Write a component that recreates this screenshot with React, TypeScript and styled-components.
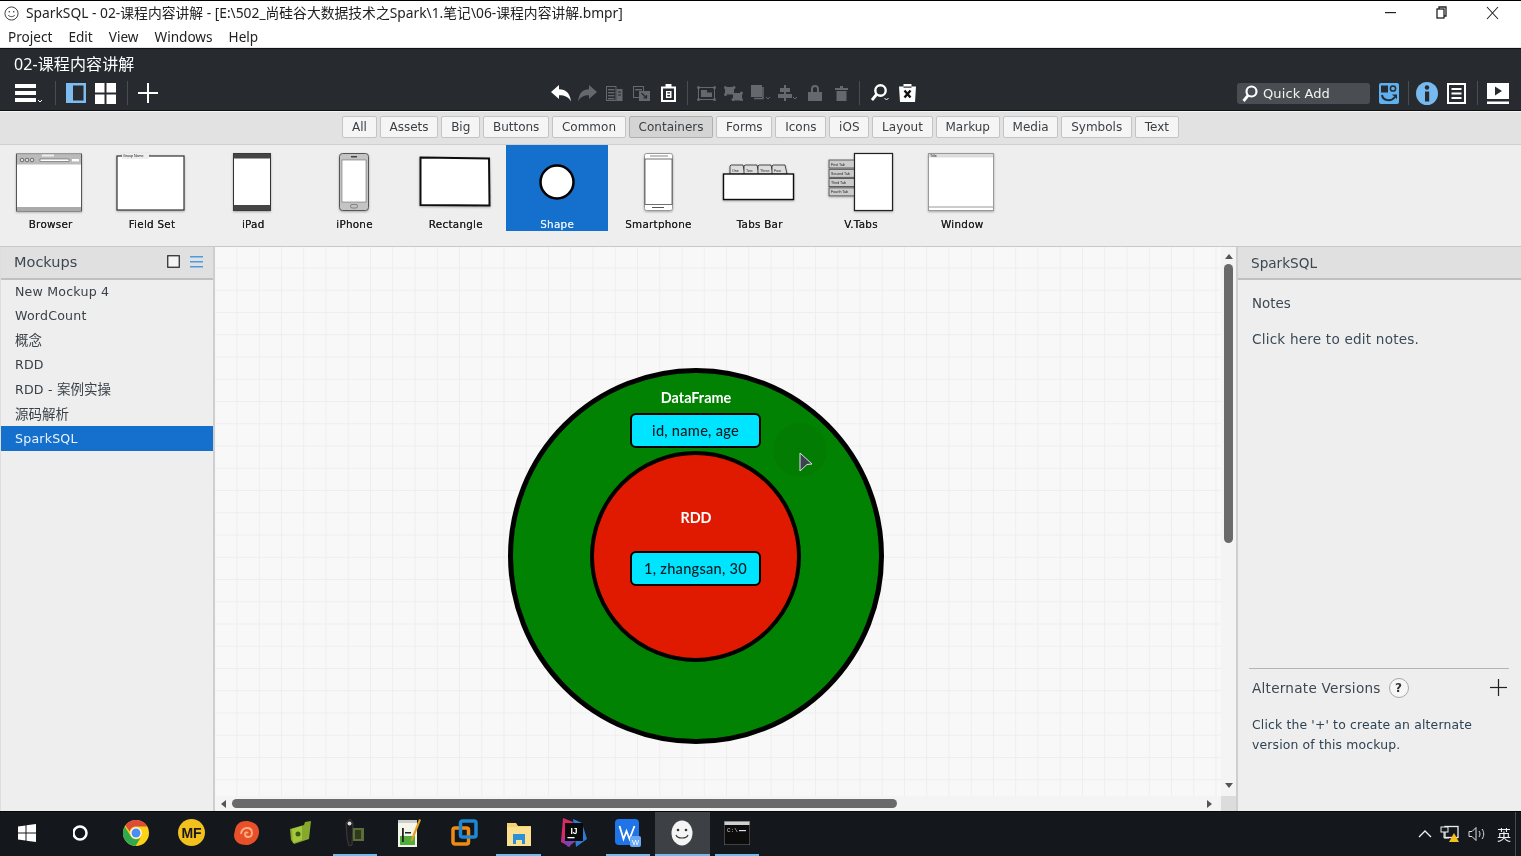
import React from "react";
import styled, { createGlobalStyle } from "styled-components";

const UI = `"DejaVu Sans", "Noto Sans CJK SC", sans-serif`;
const WIN = `"Noto Sans", "Noto Sans CJK SC", sans-serif`;
const SKETCH = `Lato, "Noto Sans", sans-serif`;

const Global = createGlobalStyle`
  html, body { margin: 0; padding: 0; background: #fff; }
  * { box-sizing: border-box; }
`;

const Page = styled.div`
  width: 1521px; height: 856px; overflow: hidden; display: flex; flex-direction: column;
  font-family: ${UI}; background: #eee; filter: blur(0.35px);
`;

/* title bar */
const TitleBar = styled.div`
  height: 26px; background: #fff; border-top: 1px solid #000; display: flex; align-items: center;
  padding-left: 4px; flex: none;
`;
const TitleText = styled.div`
  margin-left: 7px; font: 13.8px ${WIN}; color: #222; white-space: nowrap; margin-bottom: 3px;
`;
const WinButtons = styled.div`
  margin-left: auto; display: flex; align-items: center; height: 100%; padding-right: 3px; color: #222;
`;
const WinBtn = styled.div`
  width: 51px; height: 100%; display: flex; align-items: center; justify-content: center; padding-bottom: 2px;
`;
const MenuBar = styled.div`
  height: 22px; background: #fff; display: flex; align-items: center; gap: 16px; padding-left: 8px; flex: none;
  border-bottom: 1px solid #e6e6e6;
`;
const MenuItem = styled.span`
  font: 13.6px ${WIN}; color: #222;
`;

/* dark header */
const Header = styled.div`
  height: 63px; background: #272b2f; flex: none; border-top: 1px solid #111; border-bottom: 1px solid #111;
  display: flex; flex-direction: column; color: #fff;
`;
const ProjectName = styled.div`
  font: 16px ${WIN}; padding: 2px 0 0 14px; height: 32px; letter-spacing: 0.1px;
`;
const Toolbar = styled.div`
  display: flex; align-items: center; height: 24px; padding: 0 12px 0 15px;
`;
const Group = styled.div<{ $ml?: number }>`
  display: flex; align-items: center; margin-left: ${p => p.$ml ?? 0}px;
`;
const RightGroup = styled(Group)`
  margin-left: auto;
`;
const Slot = styled.div<{ $w: number; $ml?: number; $dim?: boolean }>`
  width: ${p => p.$w}px; margin-left: ${p => p.$ml ?? 0}px; height: 24px; flex: none;
  display: flex; align-items: center; justify-content: center;
  color: ${p => (p.$dim ? "#65696d" : "#fff")};
`;
const Sep = styled.div<{ $ml: number; $mr: number }>`
  width: 1px; height: 24px; background: #4a4e52; flex: none;
  margin: 0 ${p => p.$mr}px 0 ${p => p.$ml}px;
`;
const QuickAdd = styled.div`
  width: 133px; height: 21px; background: #4a4e52; border-radius: 3px; display: flex; align-items: center;
  padding-left: 3px; gap: 4px; font: 13px ${UI}; color: #f2f2f2; flex: none; letter-spacing: 0.1px;
`;

/* filter tabs */
const FilterBar = styled.div`
  height: 34px; background: #e2e2e2; border-bottom: 1px solid #cfcfcf; flex: none; border-top: 1px solid #f4f4f4;
  display: flex; align-items: center; justify-content: center; gap: 3px; padding-bottom: 2px;
`;
const FilterTab = styled.div<{ $active?: boolean }>`
  height: 22px; padding: 0 8.8px; display: flex; align-items: center; font-size: 12px; color: #3a3f44;
  background: ${p => (p.$active ? "#d4d4d4" : "#f5f5f5")};
  border: 1px solid ${p => (p.$active ? "#b0b0b0" : "#c4c4c4")};
  border-radius: 2px;
`;

/* library */
const Library = styled.div`
  height: 102px; background: #eee; flex: none; border-bottom: 1px solid #c8c8c8; display: flex;
`;
const LibItem = styled.div<{ $active?: boolean }>`
  width: 101.3px; height: 86px; flex: none; display: flex; flex-direction: column; align-items: center;
  background: ${p => (p.$active ? "#1470cc" : "transparent")};
  color: ${p => (p.$active ? "#e4f0fb" : "#222")};
  padding-top: 3px;
`;
const LibLabel = styled.div`
  font-size: 10.4px; margin-top: 0; line-height: 13px; letter-spacing: 0.25px; white-space: nowrap;
  text-shadow: 0 0 .6px currentColor;
`;

/* main */
const Main = styled.div`
  flex: 1; display: flex; min-height: 0;
`;
const LeftPanel = styled.div`
  width: 215px; flex: none; background: #eee; border-right: 2px solid #cfcfcf; border-left: 1px solid #ddd;
`;
const PanelHead = styled.div`
  height: 33px; background: #e0e0e0; border-bottom: 2px solid #c0c0c0; display: flex; align-items: center;
  color: #3d4751;
`;
const MockHead = styled(PanelHead)`
  padding: 0 10px 2px 13px; font-size: 14.5px;
`;
const HeadIcons = styled.div`
  margin-left: auto; display: flex; gap: 10px; align-items: center;
`;
const Rows = styled.div`
  margin-top: -1px;
`;
const Row = styled.div<{ $sel?: boolean }>`
  height: 24.5px; display: flex; align-items: center; padding-left: 14px; font-size: 12.6px; letter-spacing: 0.2px;
  white-space: pre; color: ${p => (p.$sel ? "#e8f2fc" : "#3a4249")};
  background: ${p => (p.$sel ? "#1470cc" : "transparent")};
`;
const Cjk = styled.span`
  font-size: 13.5px; letter-spacing: 0; position: relative; top: -1px;
`;

const CanvasWrap = styled.div`
  flex: 1; min-width: 0; display: grid; grid-template-columns: 1fr 15px; grid-template-rows: 1fr 15px; background: #f8f8f8;
`;
const Viewport = styled.div`
  position: relative; overflow: hidden; background-color: #f8f8f8;
  background-image:
    linear-gradient(#eeeeee 1px, transparent 1px),
    linear-gradient(90deg, #eeeeee 1px, transparent 1px);
  background-size: 22.25px 22.25px;
  background-position: 21.5px 20.5px;
`;
const Circle = styled.div<{ $x: number; $y: number; $d: number; $bg: string; $bw: number }>`
  position: absolute; left: ${p => p.$x}px; top: ${p => p.$y}px; width: ${p => p.$d}px; height: ${p => p.$d}px;
  border-radius: 50%; background: ${p => p.$bg}; border: ${p => p.$bw}px solid #000;
`;
const Cap = styled.div<{ $y: number }>`
  position: absolute; left: 381px; width: 200px; top: ${p => p.$y}px; text-align: center; color: #fff;
  font: 700 14.4px ${SKETCH}; line-height: 18px;
`;
const Chip = styled.div<{ $y: number }>`
  position: absolute; left: 415px; top: ${p => p.$y}px; width: 131px; height: 35px; background: #00e5ff;
  border: 2.5px solid #000; border-radius: 6px; display: flex; align-items: center; justify-content: center;
  font: 500 14.6px ${SKETCH}; color: #0a1a20; letter-spacing: 0.25px; padding-bottom: 1px;
`;
const Halo = styled.div`
  position: absolute; left: 558px; top: 176px; width: 54px; height: 54px; border-radius: 50%;
  background: radial-gradient(circle, rgba(0,90,0,.18) 0, rgba(0,90,0,.12) 80%, transparent 100%);
`;
const Pointer = styled.svg`
  position: absolute; left: 584px; top: 205px;
`;
const VScroll = styled.div`
  background: #f4f4f4; display: flex; flex-direction: column; align-items: center; position: relative;
`;
const VThumb = styled.div`
  width: 9px; height: 279px; background: #6a6a6a; border-radius: 5px; margin-top: 17px;
`;
const Arrow = styled.div<{ $dir: "up" | "down" | "left" | "right" }>`
  width: 0; height: 0; flex: none; border-style: solid;
  ${p => p.$dir === "up" && "border-width: 0 4.5px 5px; border-color: transparent transparent #555;"}
  ${p => p.$dir === "down" && "border-width: 5px 4.5px 0; border-color: #555 transparent transparent;"}
  ${p => p.$dir === "left" && "border-width: 4.5px 5px 4.5px 0; border-color: transparent #555 transparent transparent;"}
  ${p => p.$dir === "right" && "border-width: 4.5px 0 4.5px 5px; border-color: transparent transparent transparent #555;"}
`;
const ArrowUp = styled(Arrow)`
  margin-top: 7px; margin-bottom: -12px; position: relative;
`;
const ArrowDown = styled(Arrow)`
  margin-top: auto; margin-bottom: 8px;
`;
const HScroll = styled.div`
  background: #f4f4f4; display: flex; align-items: center; padding-left: 6px;
`;
const HThumb = styled.div`
  width: 665px; height: 9px; background: #6a6a6a; border-radius: 5px; margin-left: 6px;
`;
const ArrowRight = styled(Arrow)`
  margin-left: auto; margin-right: 9px;
`;
const Corner = styled.div`
  background: #dcdcdc;
`;

const RightPanel = styled.div`
  width: 285px; flex: none; background: #eee; border-left: 2px solid #cfcfcf; display: flex; flex-direction: column;
  color: #3d4751;
`;
const SideHead = styled(PanelHead)`
  padding-left: 13px; font-size: 13.6px; flex: none;
`;
const NotesTitle = styled.div`
  padding: 15px 0 0 14px; font-size: 13.4px; line-height: 18px;
`;
const NotesBody = styled.div`
  padding: 17px 0 0 14px; font-size: 13.6px; line-height: 18px; letter-spacing: 0.2px; color: #3a4a58;
`;
const Alt = styled.div`
  margin: auto 12px 0 11px; border-top: 1px solid #b4b4b4; height: 143px; padding: 8px 2px 0 3px;
`;
const AltHead = styled.div`
  display: flex; align-items: center; font-size: 13.6px; letter-spacing: 0.25px; height: 21px;
`;
const Help = styled.div`
  width: 20px; height: 20px; border-radius: 50%; border: 1.5px solid #a8a8a8; background: #f6f6f6; margin-left: 8px;
  display: flex; align-items: center; justify-content: center; font-size: 12px; font-weight: 700; color: #333;
`;
const AltPlus = styled.div`
  margin-left: auto; display: flex; color: #222;
`;
const AltText = styled.div`
  font-size: 12.4px; line-height: 20px; margin-top: 17px; letter-spacing: 0.16px; color: #2d4254;
`;

/* task bar */
const Taskbar = styled.div`
  height: 45px; flex: none; background: #14181c; border-top: 1px solid #05070a; display: flex; position: relative;
`;
const Task = styled.div<{ $open?: boolean; $cur?: boolean }>`
  width: 54.6px; height: 44px; flex: none; display: flex; align-items: center; justify-content: center;
  position: relative; padding-bottom: 3px;
  background: ${p => (p.$cur ? "#3d4145" : "transparent")};
  ${p => p.$open && `
    &::after { content: ""; position: absolute; left: ${p.$cur ? 0 : 5}px; right: ${p.$cur ? 0 : 5}px; bottom: 0; height: 2px; background: #76b9ed; }
  `}
`;
const Tray = styled.div`
  margin-left: auto; margin-right: 5px; display: flex; align-items: center; height: 100%; padding-right: 4px; gap: 8px; color: #eee;
  border-right: 1px solid #4a4a4a;
`;
const TrayLang = styled.span`
  font: 14px "Noto Sans CJK SC", sans-serif; color: #f0f0f0; margin-left: 2px;
`;

/* ------- icons ------- */
const Smile = ({ s = 15 }: { s?: number }) => (
  <svg width={s} height={s} viewBox="0 0 16 16" fill="none" stroke="#333" strokeWidth="1">
    <circle cx="8" cy="8" r="7" />
    <circle cx="5.6" cy="6.2" r=".8" fill="#333" stroke="none" />
    <circle cx="10.4" cy="6.2" r=".8" fill="#333" stroke="none" />
    <path d="M4.5 9.5c1 2.4 6 2.4 7 0" />
  </svg>
);
const Sv = (p: React.SVGProps<SVGSVGElement> & { w: number; h: number }) => {
  const { w, h, children, ...r } = p;
  return <svg width={w} height={h} viewBox={`0 0 ${w} ${h}`} fill="currentColor" {...r}>{children}</svg>;
};
const IcoMenu = () => (
  <Sv w={31} h={24}>
    <rect x="0" y="3" width="21" height="4" /><rect x="0" y="10" width="21" height="4" /><rect x="0" y="17" width="21" height="4" />
    <path d="M23 19l2 2 2-2" fill="none" stroke="currentColor" strokeWidth="1" />
  </Sv>
);
const IcoPanel = () => (
  <Sv w={20} h={20}>
    <rect x="0" y="0" width="20" height="20" fill="#7dbcf0" />
    <rect x="7" y="2.5" width="10.5" height="15" fill="#272b2f" />
  </Sv>
);
const IcoGrid = () => (
  <Sv w={21} h={21}>
    <rect width="9.5" height="9.5" /><rect x="11.5" width="9.5" height="9.5" /><rect y="11.5" width="9.5" height="9.5" /><rect x="11.5" y="11.5" width="9.5" height="9.5" />
  </Sv>
);
const IcoPlus = ({ s = 20, t = 2 }: { s?: number; t?: number }) => (
  <Sv w={s} h={s}><rect x={s / 2 - t / 2} width={t} height={s} /><rect y={s / 2 - t / 2} width={s} height={t} /></Sv>
);
const IcoUndo = () => (
  <Sv w={20} h={17}><path d="M0 7l8-7v4.2c7 .2 11 4 12 12.3-2.6-4.6-6-6.2-12-6.2V14z" /></Sv>
);
const IcoRedo = () => (
  <Sv w={19} h={17}><path d="M19 7l-8-7v4.2C4.4 4.4 1 8.200 0 16.500c2.600-4.600 5.600-6.200 11-6.200V14z" /></Sv>
);
const IcoCopy = () => (
  <Sv w={17} h={15}>
    <rect x=".5" y=".5" width="9.500" height="14" fill="none" stroke="currentColor" />
    <rect x="2" y="3" width="6.500" height="1.400" /><rect x="2" y="6" width="6.500" height="1.400" /><rect x="2" y="9" width="6.500" height="1.400" /><rect x="2" y="12" width="6.500" height="1.400" />
    <rect x="10.500" y="3" width="6" height="12" />
    <rect x="12" y="5.500" width="3" height="1" fill="#272b2f" /><rect x="12" y="8.500" width="3" height="1" fill="#272b2f" />
  </Sv>
);
const IcoPaste = () => (
  <Sv w={17} h={15}>
    <rect x=".5" y=".5" width="10" height="11" fill="none" stroke="currentColor" />
    <rect x="2" y="3" width="7" height="1.400" />
    <rect x="6" y="5" width="11" height="10" />
    <path d="M8.500 7l5 5M13.500 9v3h-3" fill="none" stroke="#272b2f" strokeWidth="1.200" />
  </Sv>
);
const IcoClip = () => (
  <Sv w={15} h={18}>
    <path fillRule="evenodd" d="M0 2.500h4.500V0h6v2.500H15V18H0zM2 4.500V16h11V4.500z" />
    <path fillRule="evenodd" d="M5 7h5.500v7H5zM6.300 8.300v1.200H9V8.300zM6.300 11v1.500H9V11z" />
  </Sv>
);
const IcoGroup = () => (
  <Sv w={19} h={15}>
    <rect x="1.500" y="1.500" width="16" height="12" fill="none" stroke="currentColor" strokeWidth="1" />
    <circle cx="1.500" cy="1.500" r="1.500" /><circle cx="17.500" cy="1.500" r="1.500" /><circle cx="1.500" cy="13.500" r="1.500" /><circle cx="17.500" cy="13.500" r="1.500" />
    <rect x="4" y="4" width="6" height="7" /><rect x="9" y="6.500" width="6" height="4.500" />
  </Sv>
);
const IcoUngroup = () => (
  <Sv w={19} h={15}>
    <rect x="1" y="1" width="9" height="7.500" /><rect x="9" y="7" width="9" height="7.500" />
    <circle cx="1.500" cy="1.500" r="1.500" /><circle cx="10" cy="1.500" r="1.500" /><circle cx="1.500" cy="8.500" r="1.500" />
    <circle cx="17.500" cy="7" r="1.500" /><circle cx="9" cy="13.500" r="1.500" /><circle cx="17.500" cy="13.500" r="1.500" />
  </Sv>
);
const IcoLayer = () => (
  <Sv w={20} h={16}>
    <rect x="0" y="0" width="11" height="12" />
    <path d="M12 2v11.500H3" fill="none" stroke="currentColor" strokeWidth="1.500" />
    <path d="M15 12l2 2 2-2" fill="none" stroke="currentColor" />
  </Sv>
);
const IcoAlign = () => (
  <Sv w={20} h={16}>
    <rect x="6" width="2" height="16" /><rect x="2" y="3" width="10" height="4" /><rect y="9" width="14" height="4" />
    <path d="M15 12l2 2 2-2" fill="none" stroke="currentColor" />
  </Sv>
);
const IcoLock = () => (
  <Sv w={14} h={16}>
    <path d="M3 7V4a4 4 0 018 0v3h3v9H0V7zM5 7h4V4a2 2 0 00-4 0z" fillRule="evenodd" />
  </Sv>
);
const IcoTrash = () => (
  <Sv w={13} h={15}><rect x="5" width="3" height="2" /><rect y="2" width="13" height="2" /><rect x="1.500" y="5" width="10" height="10" /></Sv>
);
const IcoSearch = () => (
  <Sv w={19} h={18}>
    <circle cx="9.500" cy="6.500" r="5.200" fill="none" stroke="currentColor" strokeWidth="2.400" />
    <path d="M5.500 10.500L1 16" stroke="currentColor" strokeWidth="2.800" />
    <path d="M13.500 14l2 2 2-2" fill="none" stroke="currentColor" />
  </Sv>
);
const IcoClipX = () => (
  <Sv w={17} h={18}>
    <path d="M0 2.500h4.500V0h8v2.500H17l-1 15.500H1z" />
    <path d="M5.500 6.500l6 7M11.500 6.500l-6 7" stroke="#111" strokeWidth="2.400" />
    <rect x="4.500" y="2.500" width="8" height="1.200" fill="#272b2f" />
  </Sv>
);
const IcoFace = () => (
  <Sv w={20} h={21}>
    <rect width="20" height="21" rx="2" fill="#5fb0ee" />
    <rect x="2" y="2.500" width="7" height="7" fill="#272b2f" />
    <circle cx="14" cy="5.500" r="2.600" fill="none" stroke="#272b2f" strokeWidth="1.500" />
    <path d="M3 12c1 6 9 7 13 2" fill="none" stroke="#272b2f" strokeWidth="2" />
    <path d="M13 11.500h5v4.500z" fill="#272b2f" />
  </Sv>
);
const IcoInfo = () => (
  <Sv w={22} h={23}>
    <ellipse cx="11" cy="11.500" rx="11" ry="11.500" fill="#76baf0" />
    <circle cx="11" cy="5.500" r="2.200" fill="#272b2f" />
    <rect x="9" y="9.500" width="4.200" height="10" fill="#272b2f" />
  </Sv>
);
const IcoList = () => (
  <Sv w={19} h={21}>
    <rect x="1" y="1" width="17" height="19" fill="none" stroke="currentColor" strokeWidth="2" />
    <rect x="4.500" y="5" width="10" height="2" /><rect x="4.500" y="9.500" width="10" height="2" /><rect x="4.500" y="14" width="10" height="2" />
  </Sv>
);
const IcoPlay = () => (
  <Sv w={22} h={21}>
    <rect width="22" height="16" /><rect y="18.500" width="22" height="2.500" />
    <path d="M8 3.500l7 4.500-7 4.500z" fill="#272b2f" />
  </Sv>
);
const IcoMag = () => (
  <svg width="19" height="17" viewBox="0 0 19 17" fill="none" stroke="#fff" strokeWidth="2.200">
    <circle cx="11.500" cy="6.500" r="5" /><path d="M8 10.500L3.500 16" strokeWidth="2.800" />
  </svg>
);

/* ------- library thumbnails: drawn in a 101x70 box ------- */
const Thumb = ({ children }: { children: React.ReactNode }) => (
  <svg width="101" height="70" viewBox="0 0 101 70">
    <defs>
      <filter id="ts" x="-10%" y="-10%" width="120%" height="120%">
        <feDropShadow dx="0" dy="1" stdDeviation="1" floodOpacity=".3" />
      </filter>
    </defs>
    {children}
  </svg>
);
const tt = { fontFamily: "Liberation Sans, sans-serif", fontSize: 3.600, fill: "#222" };
const thumbs: Record<string, React.ReactNode> = {
  Browser: (
    <g filter="url(#ts)">
      <rect x="16.500" y="6" width="65" height="57" fill="#fff" stroke="#555" />
      <rect x="17" y="6.500" width="64" height="10" fill="#bbb" />
      <rect x="42" y="6.500" width="12" height="2" fill="#eee" />
      <circle cx="22" cy="12" r="1.800" fill="#ddd" stroke="#333" strokeWidth=".6" />
      <circle cx="27" cy="12" r="1.800" fill="#ddd" stroke="#333" strokeWidth=".6" />
      <circle cx="32" cy="12" r="1.800" fill="#ddd" stroke="#333" strokeWidth=".6" />
      <rect x="40" y="11" width="29" height="2.400" fill="#fff" stroke="#444" strokeWidth=".5" />
      <rect x="72" y="11" width="7" height="2.400" fill="#fff" />
      <rect x="17" y="59" width="64" height="3.500" fill="#aaa" />
    </g>
  ),
  "Field Set": (
    <g filter="url(#ts)">
      <rect x="16" y="8" width="67" height="54" fill="#fff" stroke="#333" strokeWidth="1.200" />
      <rect x="21" y="5" width="27" height="6" fill="#eee" />
      <text x="22" y="9" {...tt}>Group Name</text>
    </g>
  ),
  iPad: (
    <g filter="url(#ts)">
      <rect x="30.500" y="5.500" width="37" height="57" fill="#fff" stroke="#333" />
      <rect x="30.500" y="5.500" width="37" height="5" fill="#444" />
      <rect x="30.500" y="57" width="37" height="5.500" fill="#444" />
    </g>
  ),
  iPhone: (
    <g filter="url(#ts)">
      <rect x="35.500" y="5.500" width="29" height="57" rx="3" fill="#c4c4c4" stroke="#555" />
      <rect x="38" y="12" width="24" height="42" fill="#fff" stroke="#555" strokeWidth=".5" />
      <rect x="47" y="8" width="6" height="1.500" fill="#444" />
      <rect x="46.500" y="56.500" width="7" height="3.500" rx="1.500" fill="none" stroke="#555" strokeWidth=".6" />
    </g>
  ),
  Rectangle: (
    <g filter="url(#ts)">
      <path d="M15.500 9.500L84 10.500 84.500 57.500 15.500 57z" fill="#fff" stroke="#111" strokeWidth="2" />
    </g>
  ),
  Shape: <circle cx="50" cy="34" r="16.500" fill="#fff" stroke="#000" strokeWidth="2.500" />,
  Smartphone: (
    <g filter="url(#ts)">
      <rect x="36.500" y="5.500" width="28" height="57" rx="2" fill="#fff" stroke="#999" />
      <rect x="37" y="11" width="27" height="45.500" fill="#fff" stroke="#333" strokeWidth=".7" />
      <rect x="42" y="7.500" width="18" height="1" fill="#888" />
      <rect x="44" y="59" width="12" height="1" fill="#555" />
    </g>
  ),
  "Tabs Bar": (
    <g filter="url(#ts)">
      {[21, 35, 49, 63].map((x, i) => (
        <g key={x}>
          <path d={`M${x} 26V18l1-1h12l2 9z`} fill="#ddd" stroke="#222" strokeWidth=".8" />
          <text x={x + 2} y="23.500" {...tt}>{["One", "Two", "Three", "Four"][i]}</text>
        </g>
      ))}
      <rect x="14.500" y="26" width="70" height="25.500" fill="#fff" stroke="#111" strokeWidth="1.400" />
    </g>
  ),
  "V.Tabs": (
    <g filter="url(#ts)">
      {["First Tab", "Second Tab", "Third Tab", "Fourth Tab"].map((t, i) => (
        <g key={t}>
          <rect x="18" y={12 + i * 9.300} width="26" height="8" fill="#ccc" stroke="#444" strokeWidth=".8" />
          <text x="20" y={17.500 + i * 9.300} {...tt}>{t}</text>
        </g>
      ))}
      <rect x="43.500" y="5.500" width="38" height="57" fill="#fff" stroke="#222" strokeWidth="1.200" />
    </g>
  ),
  Window: (
    <g filter="url(#ts)">
      <rect x="16.500" y="5.500" width="65" height="57" fill="#fff" stroke="#999" />
      <rect x="17" y="6" width="64" height="3.500" fill="#ddd" />
      <text x="18" y="9" {...tt}>Title</text>
      <rect x="17" y="58" width="64" height="2" fill="#ccc" />
    </g>
  ),
};

/* ------- task bar icons ------- */
const TWin = () => (
  <svg width="18" height="18" viewBox="0 0 18 18" fill="#fff">
    <path d="M0 2.500L7.500 1.400V8.500H0zM8.500 1.200L18 0V8.500H8.500zM0 9.500H7.500V16.600L0 15.500zM8.500 9.500H18V18L8.500 16.800z" />
  </svg>
);
const TRing = () => (
  <svg width="18" height="18" viewBox="0 0 18 18"><circle cx="7" cy="9" r="6.500" fill="none" stroke="#fff" strokeWidth="2.500" /></svg>
);
const TChrome = () => (
  <svg width="26" height="26" viewBox="0 0 26 26">
    <circle cx="13" cy="13" r="13" fill="#fcd116" />
    <path d="M13 0a13 13 0 0111.300 6.500H13a6.500 6.500 0 00-6.300 4.900L2.300 5.600A13 13 0 0113 0z" fill="#dd4b39" />
    <path d="M1.700 6.500A13 13 0 0012.500 26l5.300-8.500a6.500 6.500 0 01-10.500-2z" fill="#2da94f" />
    <circle cx="13" cy="13" r="5.800" fill="#fff" /><circle cx="13" cy="13" r="4.500" fill="#4a8ef0" />
  </svg>
);
const TMF = () => (
  <svg width="27" height="27" viewBox="0 0 27 27">
    <circle cx="13.500" cy="13.500" r="13.500" fill="#f2c11e" />
    <text x="13.500" y="18.500" textAnchor="middle" fontFamily="Liberation Sans, sans-serif" fontWeight="700" fontSize="14" fill="#1a1a1a">MF</text>
  </svg>
);
const TSwirl = () => (
  <svg width="28" height="26" viewBox="0 0 28 26" fill="none">
    <path d="M2 15c0 7 6 10 12 10 7 0 13-6 13-13S21 1 14 1 4 5 3 10z" fill="#e8502a" />
    <path d="M9 14a6 6 0 016-6c3 0 5 2 5 5s-2 4-4 4-3-1-3-3 2-2 3-1" stroke="#ffb080" strokeWidth="1.800" />
  </svg>
);
const TBook = () => (
  <svg width="24" height="24" viewBox="0 0 24 24">
    <path d="M2 8l14-4 1-3 6-1-2 18-15 5-3-4z" fill="#86a82c" />
    <path d="M4 8l10-3v14l-9 3z" fill="#a4c63c" />
    <circle cx="10" cy="13" r="2.500" fill="#3f5a10" />
  </svg>
);
const TMic = () => (
  <svg width="22" height="27" viewBox="0 0 22 27">
    <path d="M2 4l4-4 3 4-1 22-3 1-2-8z" fill="#1c1c1c" stroke="#555" strokeWidth=".6" />
    <circle cx="5.500" cy="4.500" r="2" fill="#ddd" />
    <rect x="9" y="9" width="11" height="13" fill="#5c6e38" />
    <rect x="11" y="11" width="6" height="9" fill="#2e3a1a" />
  </svg>
);
const TNote = () => (
  <svg width="24" height="28" viewBox="0 0 24 28">
    <rect x="1" y="3" width="19" height="25" fill="#f4f6ea" />
    <rect x="3" y="17" width="15" height="9" fill="#4fae3c" />
    <rect x="5" y="9" width="1.800" height="14" fill="#222" /><rect x="8" y="13" width="6" height="1.500" fill="#222" />
    <path d="M22 0l2 1-8 20-2.500 2 .5-3z" fill="#e0a020" />
    <rect x="1" y="1" width="19" height="3" fill="#ccc" />
  </svg>
);
const TVm = () => (
  <svg width="27" height="27" viewBox="0 0 27 27" fill="none">
    <rect x="2" y="9" width="15.500" height="16" rx="2" stroke="#ef8a14" strokeWidth="3.500" />
    <rect x="9.500" y="2" width="15.500" height="16" rx="2" stroke="#1e88d2" strokeWidth="3.500" />
  </svg>
);
const TFolder = () => (
  <svg width="24" height="26" viewBox="0 0 24 26">
    <path d="M0 3h9l2 3h13v20H0z" fill="#f6d36f" />
    <rect y="7" width="24" height="19" fill="#fbe08f" />
    <path d="M6 16h12v8h-3v-4H9v4H6z" fill="#2d8fd8" />
    <rect x="6" y="14" width="12" height="3" fill="#2d8fd8" />
  </svg>
);
const TIdea = () => (
  <svg width="27" height="29" viewBox="0 0 27 29">
    <path d="M3 0l10 4-3 25-9-5z" fill="#d9296a" />
    <path d="M13 1l9 4 5 16-11 8z" fill="#2f7ad8" />
    <path d="M1 20l7 9 8-6z" fill="#7f3fb5" />
    <rect x="5" y="5" width="18" height="18" fill="#0a0a0a" />
    <text x="14" y="16" textAnchor="middle" fontFamily="Liberation Sans, sans-serif" fontWeight="700" fontSize="8.500" fill="#fff">IJ</text>
    <rect x="7.500" y="19" width="7" height="1.300" fill="#fff" />
  </svg>
);
const TWps = () => (
  <svg width="26" height="28" viewBox="0 0 26 28">
    <rect width="24" height="26" rx="4" fill="#1f74e8" />
    <path d="M4.500 7l4 13 3-8 3 8 5-13" fill="none" stroke="#fff" strokeWidth="1.800" />
    <rect x="15" y="17" width="11" height="11" rx="2" fill="#69a8f4" />
    <text x="20.500" y="26" textAnchor="middle" fontFamily="Liberation Sans, sans-serif" fontSize="7.500" fill="#fff">W</text>
  </svg>
);
const TSmile = () => (
  <svg width="22" height="26" viewBox="0 0 22 26">
    <ellipse cx="11" cy="13" rx="10.500" ry="12.500" fill="#f4f4f4" />
    <circle cx="7" cy="10" r="1.300" fill="#333" /><circle cx="15" cy="10" r="1.300" fill="#333" />
    <path d="M5 15c1.500 4 10.500 4 12 0" fill="none" stroke="#333" strokeWidth="1.200" />
  </svg>
);
const TCmd = () => (
  <svg width="26" height="24" viewBox="0 0 26 24">
    <rect width="26" height="24" fill="#0c0c0c" stroke="#777" strokeWidth="1" />
    <rect x=".5" y=".5" width="25" height="3.500" fill="#cfcfcf" />
    <text x="3" y="11" fontFamily="Liberation Mono, monospace" fontSize="6" fill="#ddd">C:\</text>
    <rect x="15" y="9" width="7" height="1.200" fill="#ddd" />
  </svg>
);

const tabs = ["All", "Assets", "Big", "Buttons", "Common", "Containers", "Forms", "Icons", "iOS", "Layout", "Markup", "Media", "Symbols", "Text"];
const mockups: { key: string; label: React.ReactNode }[] = [
  { key: "a", label: "New Mockup 4" },
  { key: "b", label: "WordCount" },
  { key: "c", label: <Cjk>概念</Cjk> },
  { key: "d", label: "RDD" },
  { key: "e", label: <>RDD - <Cjk>案例实操</Cjk></> },
  { key: "f", label: <Cjk>源码解析</Cjk> },
  { key: "g", label: "SparkSQL" },
];
const library = ["Browser", "Field Set", "iPad", "iPhone", "Rectangle", "Shape", "Smartphone", "Tabs Bar", "V.Tabs", "Window"];
const tasks: { icon: React.ReactNode; open?: boolean; cur?: boolean }[] = [
  { icon: <TWin /> }, { icon: <TRing /> }, { icon: <TChrome /> }, { icon: <TMF /> }, { icon: <TSwirl /> }, { icon: <TBook /> },
  { icon: <TMic />, open: true }, { icon: <TNote /> }, { icon: <TVm /> }, { icon: <TFolder />, open: true }, { icon: <TIdea /> },
  { icon: <TWps />, open: true }, { icon: <TSmile />, open: true, cur: true }, { icon: <TCmd />, open: true },
];

export default function App() {
  return (
    <Page>
      <Global />
      <TitleBar>
        <Smile />
        <TitleText>SparkSQL - 02-课程内容讲解 - [E:\502_尚硅谷大数据技术之Spark\1.笔记\06-课程内容讲解.bmpr]</TitleText>
        <WinButtons>
          <WinBtn><svg width="11" height="2"><rect width="11" height="1.200" fill="#222" /></svg></WinBtn>
          <WinBtn>
            <svg width="11" height="13" viewBox="0 0 11 13" fill="none" stroke="#222" strokeWidth="1.300">
              <rect x="1" y="3" width="7" height="9" /><path d="M3 3V1h7v9H8" />
            </svg>
          </WinBtn>
          <WinBtn>
            <svg width="13" height="14" viewBox="0 0 13 14" stroke="#222" strokeWidth="1.100"><path d="M1 1l11 12M12 1L1 13" /></svg>
          </WinBtn>
        </WinButtons>
      </TitleBar>
      <MenuBar>
        {["Project", "Edit", "View", "Windows", "Help"].map(m => <MenuItem key={m}>{m}</MenuItem>)}
      </MenuBar>
      <Header>
        <ProjectName>02-课程内容讲解</ProjectName>
        <Toolbar>
          <Group>
            <Slot $w={31}><IcoMenu /></Slot>
            <Sep $ml={9} $mr={10} />
            <Slot $w={20}><IcoPanel /></Slot>
            <Slot $w={21} $ml={9}><IcoGrid /></Slot>
            <Sep $ml={11} $mr={10} />
            <Slot $w={20}><IcoPlus /></Slot>
          </Group>
          <Group $ml={389}>
            <Slot $w={27}><IcoUndo /></Slot>
            <Slot $w={27} $dim><IcoRedo /></Slot>
            <Slot $w={27} $dim><IcoCopy /></Slot>
            <Slot $w={27} $dim><IcoPaste /></Slot>
            <Slot $w={27}><IcoClip /></Slot>
            <Sep $ml={5} $mr={5} />
            <Slot $w={27} $dim><IcoGroup /></Slot>
            <Slot $w={27} $dim><IcoUngroup /></Slot>
            <Slot $w={27} $dim><IcoLayer /></Slot>
            <Slot $w={27} $dim><IcoAlign /></Slot>
            <Slot $w={27} $dim><IcoLock /></Slot>
            <Slot $w={27} $dim><IcoTrash /></Slot>
            <Sep $ml={4} $mr={7} />
            <Slot $w={27}><IcoSearch /></Slot>
            <Slot $w={27}><IcoClipX /></Slot>
          </Group>
          <RightGroup>
            <QuickAdd><IcoMag />Quick Add</QuickAdd>
            <Slot $w={20} $ml={9}><IcoFace /></Slot>
            <Sep $ml={9} $mr={7} />
            <Slot $w={22}><IcoInfo /></Slot>
            <Slot $w={19} $ml={9}><IcoList /></Slot>
            <Sep $ml={11} $mr={9} />
            <Slot $w={22}><IcoPlay /></Slot>
          </RightGroup>
        </Toolbar>
      </Header>
      <FilterBar>
        {tabs.map(t => <FilterTab key={t} $active={t === "Containers"}>{t}</FilterTab>)}
      </FilterBar>
      <Library>
        {library.map(n => (
          <LibItem key={n} $active={n === "Shape"}>
            <Thumb>{thumbs[n]}</Thumb>
            <LibLabel>{n}</LibLabel>
          </LibItem>
        ))}
      </Library>
      <Main>
        <LeftPanel>
          <MockHead>
            Mockups
            <HeadIcons>
              <svg width="13" height="13"><rect x=".75" y=".75" width="11.500" height="11.500" fill="#f4f4f4" stroke="#222" strokeWidth="1.200" /></svg>
              <svg width="13" height="13" fill="#4a9be0"><rect y="1" width="13" height="1.500" /><rect y="6" width="13" height="1.500" /><rect y="11" width="13" height="1.500" /></svg>
            </HeadIcons>
          </MockHead>
          <Rows>
            {mockups.map(m => <Row key={m.key} $sel={m.key === "g"}>{m.label}</Row>)}
          </Rows>
        </LeftPanel>
        <CanvasWrap>
          <Viewport>
            <Circle $x={293} $y={121} $d={376} $bg="#028202" $bw={5} />
            <Circle $x={375} $y={204} $d={211} $bg="#e01a00" $bw={4.500} />
            <Cap $y={142}>DataFrame</Cap>
            <Chip $y={166}>id, name, age</Chip>
            <Cap $y={262}>RDD</Cap>
            <Chip $y={304}>1, zhangsan, 30</Chip>
            <Halo />
            <Pointer width="14" height="20" viewBox="0 0 14 20">
              <path d="M1 1l12 11-5 .5-7 6.500z" fill="#3a4450" stroke="#e0e0e0" strokeWidth="1" />
            </Pointer>
          </Viewport>
          <VScroll>
            <ArrowUp $dir="up" />
            <VThumb />
            <ArrowDown $dir="down" />
          </VScroll>
          <HScroll>
            <Arrow $dir="left" />
            <HThumb />
            <ArrowRight $dir="right" />
          </HScroll>
          <Corner />
        </CanvasWrap>
        <RightPanel>
          <SideHead>SparkSQL</SideHead>
          <NotesTitle>Notes</NotesTitle>
          <NotesBody>Click here to edit notes.</NotesBody>
          <Alt>
            <AltHead>
              Alternate Versions
              <Help>?</Help>
              <AltPlus><IcoPlus s={17} t={1.200} /></AltPlus>
            </AltHead>
            <AltText>Click the '+' to create an alternate<br />version of this mockup.</AltText>
          </Alt>
        </RightPanel>
      </Main>
      <Taskbar>
        {tasks.map((t, i) => <Task key={i} $open={t.open} $cur={t.cur}>{t.icon}</Task>)}
        <Tray>
          <svg width="14" height="8" viewBox="0 0 14 8" fill="none" stroke="#eee" strokeWidth="1.400"><path d="M1 7l6-6 6 6" /></svg>
          <svg width="20" height="18" viewBox="0 0 20 18">
            <rect x="5" y="1.500" width="13" height="11" fill="none" stroke="#eee" strokeWidth="1.300" />
            <rect x="1" y="2" width="7" height="5" fill="#14181c" stroke="#eee" />
            <path d="M4 7v6h5" fill="none" stroke="#eee" />
            <path d="M14 8l5 9H9z" fill="#f2c11e" />
          </svg>
          <svg width="19" height="16" viewBox="0 0 19 16" fill="none" stroke="#ddd" strokeWidth="1">
            <path d="M1 5.500h3l4-4v13l-4-4H1z" /><path d="M11 5c1.300 1.500 1.300 4.500 0 6M14 3c2.300 2.800 2.300 7.200 0 10" />
          </svg>
          <TrayLang>英</TrayLang>
        </Tray>
      </Taskbar>
    </Page>
  );
}
